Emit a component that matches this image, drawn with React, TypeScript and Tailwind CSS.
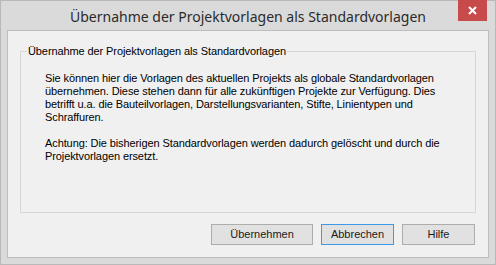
import React from "react";

const bodyFont = { fontFamily: '"Liberation Sans", Arial, sans-serif' };

function DialogButton({ label, width, focused }: { label: string; width: string; focused?: boolean }) {
  return (
    <button
      className={`${width} h-[21px] border bg-[#e1e1e1] text-[11px] text-[#1a1a1a] leading-none ${
        focused ? "border-[#3c9ae6]" : "border-[#adadad]"
      }`}
      style={bodyFont}
    >
      {label}
    </button>
  );
}

export default function App() {
  return (
    <div className="w-[496px] h-[265px] bg-[#dadada] border border-[#b9b9b9] flex flex-col">
      {/* title bar */}
      <div className="relative h-[29px] shrink-0 flex items-center justify-center">
        <span
          className="text-[14px] text-[#2b2b2b] pt-[2px]"
          style={{ fontFamily: '"Noto Sans", "Open Sans", sans-serif' }}
        >
          Übernahme der Projektvorlagen als Standardvorlagen
        </span>
        <div className="absolute top-[-1px] right-[8px] w-[29px] h-[21px] bg-[#c74b4b] flex items-center justify-center">
          <svg width="9" height="9" viewBox="0 0 9 9">
            <path d="M1 1 L8 8 M8 1 L1 8" stroke="#fff" strokeWidth="2" />
          </svg>
        </div>
      </div>

      {/* client area */}
      <div className="mx-[6px] mb-[6px] flex-1 border border-[#bdbdbd] bg-[#f0f0f0] flex flex-col px-[12px] pt-[12px]">
        <fieldset className="h-[170px] border border-[#d6d6d6] pl-[6px] pr-[8px]">
          <legend className="px-[1px] text-[11px] tracking-[-0.1px] text-black" style={bodyFont}>
            Übernahme der Projektvorlagen als Standardvorlagen
          </legend>
          <div className="ml-[18px] mt-[12px] text-[11px] tracking-[-0.1px] leading-[13px] text-black" style={bodyFont}>
            <p>
              Sie können hier die Vorlagen des aktuellen Projekts als globale Standardvorlagen übernehmen. Diese
              stehen dann für alle zukünftigen Projekte zur Verfügung. Dies betrifft u.a. die Bauteilvorlagen,
              Darstellungsvarianten, Stifte, Linientypen und Schraffuren.
            </p>
            <p className="mt-[13px]">
              Achtung: Die bisherigen Standardvorlagen werden dadurch gelöscht und durch die Projektvorlagen ersetzt.
            </p>
          </div>
        </fieldset>

        <div className="mt-[11px] flex justify-end gap-[8px] pr-[1px]">
          <DialogButton label="Übernehmen" width="w-[102px]" />
          <DialogButton label="Abbrechen" width="w-[73px]" focused />
          <DialogButton label="Hilfe" width="w-[73px]" />
        </div>
      </div>
    </div>
  );
}
